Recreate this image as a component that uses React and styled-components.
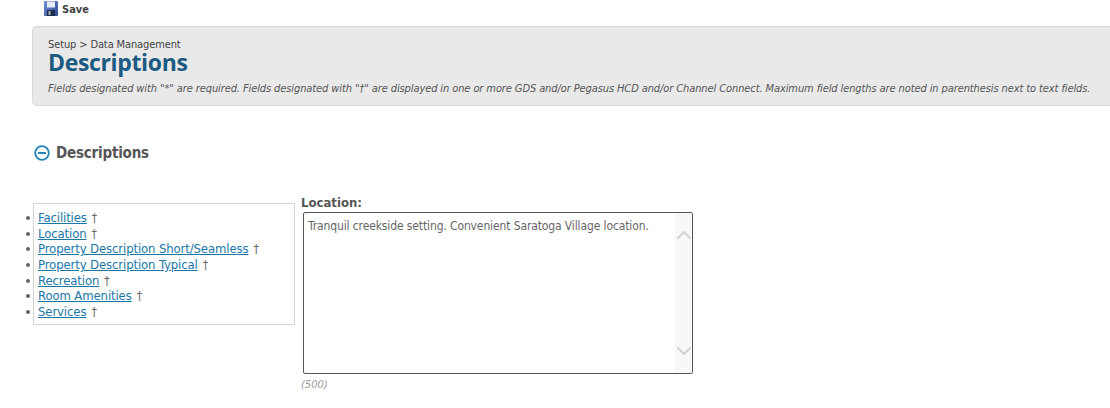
import React from "react";
import styled, {createGlobalStyle} from "styled-components";
import {ChevronUp, ChevronDown} from "lucide-react";

const GlobalStyle = createGlobalStyle`
	html, body {
		margin: 0;
		padding: 0;
		background: #fff;
	}
	body {
		font-family: "DejaVu Sans Condensed", "Noto Sans", sans-serif;
		font-size: 12px;
		color: #555;
	}
`;

const Page = styled.div`
	width: 1110px;
	height: 408px;
	overflow: hidden;
`;

const Toolbar = styled.div`
	height: 26px;
	padding: 1px 0 0 44px;
	box-sizing: border-box;
	display: flex;
	align-items: flex-start;
	gap: 4px;
`;

const SaveLabel = styled.span`
	font-weight: 700;
	font-size: 11px;
	line-height: 17px;
	color: #444;
`;

const Header = styled.div`
	margin-left: 32px;
	height: 80px;
	box-sizing: border-box;
	padding: 11px 0 0 15px;
	background: #e9e9e9;
	border: 1px solid #d9d9d9;
	border-right: none;
	border-radius: 5px 0 0 5px;
`;

const Breadcrumb = styled.div`
	font-size: 11px;
	line-height: 13px;
	letter-spacing: -0.12px;
	color: #444;
`;

const Title = styled.h1`
	margin: 0;
	font-family: "Open Sans", sans-serif;
	font-weight: 700;
	font-size: 23px;
	line-height: 22px;
	letter-spacing: -0.35px;
	color: #1c5a82;
`;

const Hint = styled.div`
	margin-top: 9px;
	font-size: 11px;
	line-height: 13px;
	letter-spacing: -0.1px;
	font-style: italic;
	white-space: nowrap;
	color: #555;
`;

const SectionHead = styled.div`
	margin: 37px 0 0 34px;
	display: flex;
	align-items: center;
	gap: 6px;
`;

const SectionTitle = styled.h2`
	margin: 0;
	font-size: 15px;
	line-height: 20px;
	letter-spacing: -0.2px;
	font-weight: 700;
	color: #555;
`;

const Columns = styled.div`
	margin-top: 32px;
	display: flex;
	align-items: flex-start;
`;

const ListBox = styled.ul`
	margin: 8px 0 0 33px;
	padding: 6px 0 4px 4px;
	width: 262px;
	height: 122px;
	box-sizing: border-box;
	border: 1px solid #d4d4d4;
	list-style: none;
`;

const ListItem = styled.li`
	position: relative;
	height: 15.7px;
	line-height: 15.7px;
	color: #666;
	&::before {
		content: "";
		position: absolute;
		left: -12px;
		top: 6px;
		width: 4px;
		height: 4px;
		border-radius: 50%;
		background: #666;
	}
`;

const Link = styled.a`
	font-size: 13px;
	letter-spacing: -0.12px;
	color: #1a77a8;
	text-decoration: underline;
	margin-right: 5px;
`;

const Field = styled.div`
	margin-left: 6px;
	width: 392px;
`;

const FieldLabel = styled.div`
	font-weight: 700;
	font-size: 13px;
	line-height: 16px;
	color: #555;
`;

const TextBox = styled.div`
	margin: 1px 0 0 2px;
	height: 162px;
	box-sizing: border-box;
	display: flex;
	justify-content: space-between;
	border: 1px solid #555;
	border-radius: 2px;
	background: #fff;
`;

const TextValue = styled.div`
	padding: 6px 0 0 4px;
	line-height: 15px;
	letter-spacing: -0.12px;
	color: #666;
`;

const ScrollTrack = styled.div`
	width: 17px;
	display: flex;
	flex-direction: column;
	justify-content: space-between;
	align-items: center;
	padding: 10px 0;
	box-sizing: border-box;
	background: #f8f8f8;
	color: #d2d2d2;
	overflow: hidden;
`;

const MaxLength = styled.div`
	margin-top: 4px;
	font-size: 11px;
	line-height: 14px;
	font-style: italic;
	color: #999;
`;

const SaveIcon = () => (
	<svg width="14" height="15" viewBox="0 0 14 15">
		<defs>
			<linearGradient id="saveBody" x1="0" y1="0" x2="1" y2="1">
				<stop offset="0" stopColor="#6f8fd6" />
				<stop offset="1" stopColor="#2d4a8f" />
			</linearGradient>
		</defs>
		<rect x="0" y="0" width="14" height="15" rx="1" fill="url(#saveBody)" />
		<rect x="3" y="0.5" width="8" height="6" fill="#e6ebf7" />
		<rect x="3" y="9" width="8" height="6" fill="#1e2c4d" />
		<rect x="4.5" y="10" width="2" height="4" fill="#aab4c8" />
	</svg>
);

const CollapseIcon = () => (
	<svg width="16" height="16" viewBox="0 0 16 16">
		<circle cx="8" cy="8" r="6.8" fill="none" stroke="#1f86b5" strokeWidth="1.8" />
		<rect x="4" y="7" width="8" height="2" fill="#1f86b5" />
	</svg>
);

const items = [
	"Facilities",
	"Location",
	"Property Description Short/Seamless",
	"Property Description Typical",
	"Recreation",
	"Room Amenities",
	"Services",
];

const App = () => {
	return (
		<Page>
			<GlobalStyle />
			<Toolbar>
				<SaveIcon />
				<SaveLabel>Save</SaveLabel>
			</Toolbar>
			<Header>
				<Breadcrumb>Setup &gt; Data Management</Breadcrumb>
				<Title>Descriptions</Title>
				<Hint>
					Fields designated with "*" are required. Fields designated with "†" are displayed in one or more GDS and/or Pegasus HCD and/or Channel Connect. Maximum field lengths are noted in parenthesis next to text fields.
				</Hint>
			</Header>
			<SectionHead>
				<CollapseIcon />
				<SectionTitle>Descriptions</SectionTitle>
			</SectionHead>
			<Columns>
				<ListBox>
					{items.map((item) => (
						<ListItem key={item}>
							<Link href="#">{item}</Link>†
						</ListItem>
					))}
				</ListBox>
				<Field>
					<FieldLabel>Location:</FieldLabel>
					<TextBox>
						<TextValue>Tranquil creekside setting. Convenient Saratoga Village location.</TextValue>
						<ScrollTrack>
							<ChevronUp size={24} strokeWidth={2} />
							<ChevronDown size={24} strokeWidth={2} />
						</ScrollTrack>
					</TextBox>
					<MaxLength>(500)</MaxLength>
				</Field>
			</Columns>
		</Page>
	);
};

export default App;
